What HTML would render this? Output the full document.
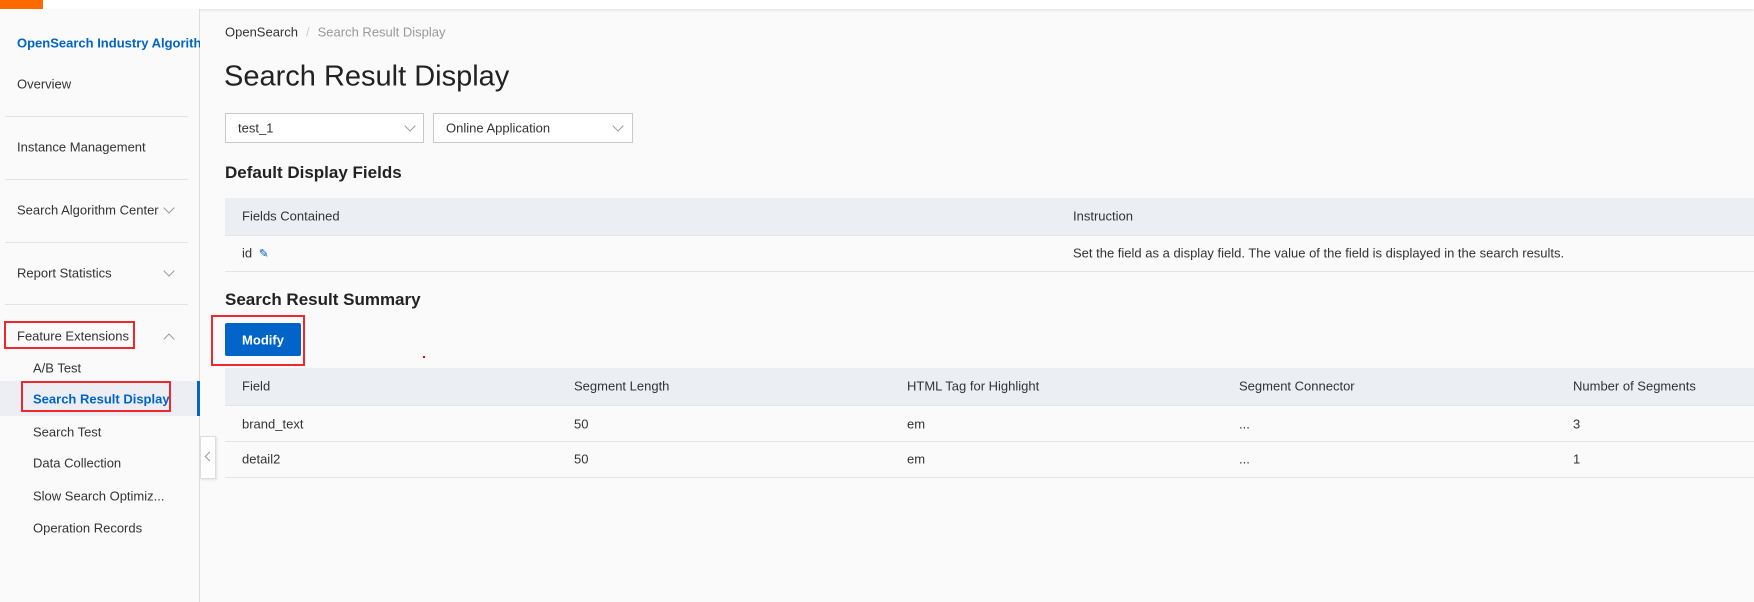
<!DOCTYPE html>
<html><head><meta charset="utf-8"><style>
*{margin:0;padding:0;box-sizing:border-box}
body{width:1754px;height:602px;overflow:hidden;background:#fafafa;font-family:"Liberation Sans",Arial,sans-serif;font-size:13px;color:#333;position:relative}
.a{position:absolute;white-space:nowrap}
.top{left:0;top:0;width:1754px;height:9px;background:#fff;box-shadow:0 1px 3px rgba(0,0,0,.12)}
.side{left:0;top:9px;width:200px;height:593px;background:#fafafa;border-right:1px solid #ddd}
.div{height:1px;background:#e3e3e3;left:5px;width:183px}
.t{transform:translateY(-50%)}
.chev{width:8px;height:8px;border-right:1.3px solid #999;border-bottom:1.3px solid #999}
.th{background:#ebeef3}
.line{height:1px;background:#e2e4e8}
.sel{height:30px;border:1px solid #c8c8c8;background:#fff}
.red{border:2px solid #f0282d}
</style></head><body>
<div class="a top"></div>
<div class="a" style="left:0;top:0;width:43px;height:9px;background:#ff6a00"></div>
<div class="a side"></div>
<div class="a t" style="left:17px;top:43px;color:#0064c8;font-weight:bold;width:183px;overflow:hidden">OpenSearch Industry Algorithm</div>
<div class="a t" style="left:17px;top:84px">Overview</div>
<div class="a div" style="top:116px"></div>
<div class="a t" style="left:17px;top:147px">Instance Management</div>
<div class="a div" style="top:179px"></div>
<div class="a t" style="left:17px;top:210px">Search Algorithm Center</div>
<div class="a chev" style="left:165px;top:204px;transform:rotate(45deg)"></div>
<div class="a div" style="top:242px"></div>
<div class="a t" style="left:17px;top:273px">Report Statistics</div>
<div class="a chev" style="left:165px;top:267px;transform:rotate(45deg)"></div>
<div class="a div" style="top:304px"></div>
<div class="a t" style="left:17px;top:336px">Feature Extensions</div>
<div class="a chev" style="left:165px;top:335px;transform:rotate(225deg)"></div>
<div class="a red" style="left:4px;top:321px;width:131px;height:28px"></div>
<div class="a t" style="left:33px;top:368px">A/B Test</div>
<div class="a" style="left:0;top:381px;width:200px;height:35px;background:#eceef3"></div>
<div class="a" style="left:197px;top:381px;width:3px;height:35px;background:#0064c8"></div>
<div class="a t" style="left:33px;top:399px;color:#0064c8;font-weight:bold">Search Result Display</div>
<div class="a red" style="left:21px;top:381px;width:150px;height:31px"></div>
<div class="a t" style="left:33px;top:432px">Search Test</div>
<div class="a t" style="left:33px;top:463px">Data Collection</div>
<div class="a t" style="left:33px;top:496px">Slow Search Optimiz...</div>
<div class="a t" style="left:33px;top:528px">Operation Records</div>
<div class="a" style="left:200px;top:436px;width:16px;height:43px;background:#fff;border:1px solid #ddd;box-shadow:1px 1px 2px rgba(0,0,0,.1)"></div>
<div class="a chev" style="left:206px;top:453px;width:7px;height:7px;transform:rotate(135deg)"></div>

<div class="a t" style="left:225px;top:32px;font-size:13px"><span style="color:#333">OpenSearch</span><span style="color:#ccc;margin:0 8px">/</span><span style="color:#999">Search Result Display</span></div>
<div class="a t" style="left:224px;top:77px;font-size:29px;color:#222">Search Result Display</div>
<div class="a sel" style="left:225px;top:113px;width:199px"></div>
<div class="a t" style="left:238px;top:128px">test_1</div>
<div class="a chev" style="left:406px;top:122px;transform:rotate(45deg)"></div>
<div class="a sel" style="left:433px;top:113px;width:200px"></div>
<div class="a t" style="left:446px;top:128px">Online Application</div>
<div class="a chev" style="left:614px;top:122px;transform:rotate(45deg)"></div>
<div class="a t" style="left:225px;top:173px;font-size:17px;font-weight:bold;color:#222">Default Display Fields</div>
<div class="a th" style="left:225px;top:198px;width:1529px;height:37px"></div>
<div class="a line" style="left:225px;top:235px;width:1529px"></div>
<div class="a t" style="left:242px;top:216px">Fields Contained</div>
<div class="a t" style="left:1073px;top:216px">Instruction</div>
<div class="a t" style="left:242px;top:253px">id <span style="color:#0064c8;font-size:12px;margin-left:3px">✎</span></div>
<div class="a t" style="left:1073px;top:253px">Set the field as a display field. The value of the field is displayed in the search results.</div>
<div class="a line" style="left:225px;top:271px;width:1529px"></div>
<div class="a t" style="left:225px;top:300px;font-size:17px;font-weight:bold;color:#222">Search Result Summary</div>
<div class="a" style="left:225px;top:323px;width:76px;height:33px;background:#0064c8;border-radius:2px"></div>
<div class="a t" style="left:225px;top:340px;width:76px;text-align:center;color:#fff;font-weight:bold">Modify</div>
<div class="a red" style="left:211px;top:315px;width:94px;height:51px"></div>
<div class="a" style="left:423px;top:356px;width:2px;height:2px;background:#f00"></div>
<div class="a th" style="left:225px;top:368px;width:1529px;height:37px"></div>
<div class="a line" style="left:225px;top:405px;width:1529px"></div>
<div class="a line" style="left:225px;top:441px;width:1529px"></div>
<div class="a line" style="left:225px;top:477px;width:1529px"></div>
<div class="a t" style="left:242px;top:386px">Field</div>
<div class="a t" style="left:574px;top:386px">Segment Length</div>
<div class="a t" style="left:907px;top:386px">HTML Tag for Highlight</div>
<div class="a t" style="left:1239px;top:386px">Segment Connector</div>
<div class="a t" style="left:1573px;top:386px">Number of Segments</div>
<div class="a t" style="left:242px;top:424px">brand_text</div>
<div class="a t" style="left:574px;top:424px">50</div>
<div class="a t" style="left:907px;top:424px">em</div>
<div class="a t" style="left:1239px;top:424px">...</div>
<div class="a t" style="left:1573px;top:424px">3</div>
<div class="a t" style="left:242px;top:459px">detail2</div>
<div class="a t" style="left:574px;top:459px">50</div>
<div class="a t" style="left:907px;top:459px">em</div>
<div class="a t" style="left:1239px;top:459px">...</div>
<div class="a t" style="left:1573px;top:459px">1</div>
</body></html>
